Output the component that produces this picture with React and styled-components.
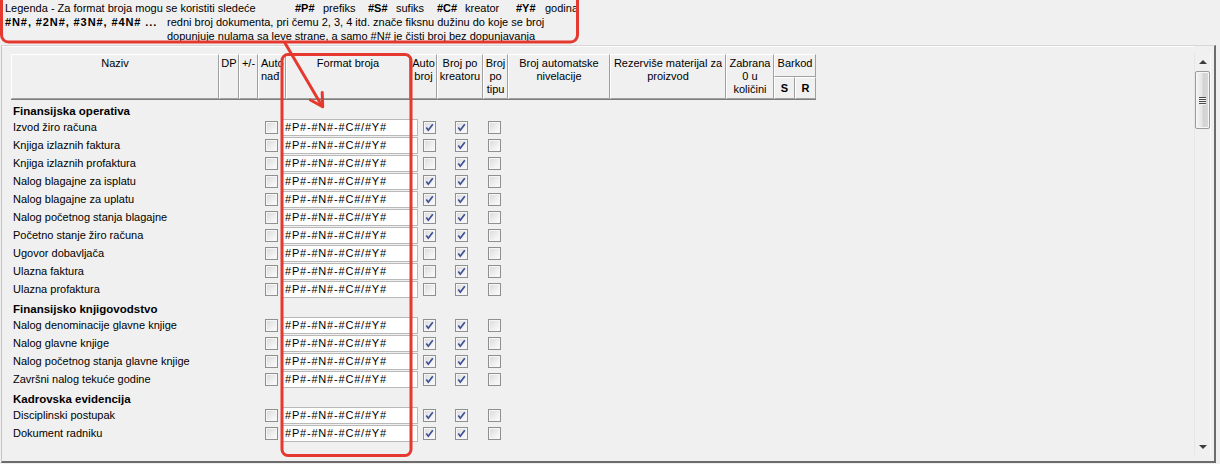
import React from "react";
import styled, { createGlobalStyle } from "styled-components";

const GlobalStyle = createGlobalStyle`
  html, body { margin: 0; padding: 0; background: #f0f0f0; }
  body {
    font-family: "Liberation Sans", Arial, sans-serif;
    font-size: 11px;
    color: #000;
  }
  * { box-sizing: border-box; }
`;

const Screen = styled.div`
  position: relative;
  width: 1220px;
  height: 464px;
  overflow: hidden;
  background: #f0f0f0;
  display: flex;
  flex-direction: column;
`;

/* ---------- legend ---------- */
const Legend = styled.div`
  height: 45px;
  flex: none;
  padding: 1px 0 0 5px;
  display: flex;
  flex-direction: column;
  line-height: 14px;
`;

const LegendLine = styled.div`
  display: flex;
  height: 14px;
  white-space: nowrap;
`;

const LegendLead = styled.span`
  flex: none;
  width: ${(p) => p.$w}px;
  font-weight: ${(p) => (p.$bold ? 700 : 400)};
  letter-spacing: ${(p) => (p.$bold ? "0.9px" : "0")};
`;

const LegendItem = styled.span`
  flex: none;
  width: ${(p) => p.$w}px;
  display: flex;
`;

const Code = styled.span`
  flex: none;
  width: ${(p) => p.$w || 28}px;
  font-weight: 700;
`;

/* ---------- grid frame ---------- */
const Frame = styled.div`
  flex: none;
  height: 418px;
  width: 1215px;
  margin-left: 1px;
  border-top: 1px solid #d6d6d6;
  border-left: 1px solid #b4c8df;
  border-right: 2px solid #6c6c6c;
  border-bottom: 2px solid #6c6c6c;
  display: flex;
`;

const GridArea = styled.div`
  flex: 1;
  overflow: hidden;
  padding: 7px 0 0 9px;
  border-top: 1px solid #fff;
`;

const HeaderRow = styled.div`
  display: flex;
  height: 46px;
  width: 805px;
  border-bottom: 1px solid #7d7d7d;
`;

const HeaderCell = styled.div`
  flex: none;
  width: ${(p) => p.$w}px;
  height: ${(p) => (p.$h ? `${p.$h}px` : "100%")};
  border-top: 1px solid #fff;
  border-left: 1px solid #fff;
  border-right: 1px solid #a0a0a0;
  border-bottom: 1px solid #a0a0a0;
  padding: ${(p) => (p.$pt != null ? p.$pt : 2)}px 1px 0 ${(p) => (p.$left ? 2 : 1)}px;
  text-align: ${(p) => (p.$left ? "left" : "center")};
  line-height: 13px;
  font-weight: ${(p) => (p.$bold ? 700 : 400)};
  overflow: hidden;
  white-space: ${(p) => (p.$pre ? "pre" : "normal")};
`;

const HeaderGroup = styled.div`
  flex: none;
  width: ${(p) => p.$w}px;
  display: flex;
  flex-direction: column;
`;

const HeaderSubRow = styled.div`
  display: flex;
  flex: 1;
`;

const SectionTitle = styled.div`
  height: 18px;
  padding: 4px 0 0 2px;
  font-weight: 700;
  font-size: 11.5px;
  line-height: 14px;
  white-space: nowrap;
`;

const Row = styled.div`
  height: 18px;
  display: grid;
  grid-template-columns: 254px 17px 141px 32px 33px 33px;
  align-items: center;
`;

const RowName = styled.div`
  padding-left: 2px;
  white-space: nowrap;
  line-height: 14px;
`;

const FormatInput = styled.input`
  width: 136px;
  height: 17px;
  margin: 0;
  padding: 0 0 0 2px;
  border: 1px solid #b9b9b9;
  background: #fff;
  font-family: "Liberation Sans", Arial, sans-serif;
  font-size: 11px;
  letter-spacing: 0.8px;
  color: #000;
  outline: none;
`;

const Box = styled.span`
  display: block;
  width: 13px;
  height: 13px;
  border: 1px solid #8e8f8f;
  background: linear-gradient(135deg, #d7d9dc 0%, #eeeeee 55%, #fdfdfd 100%);
  box-shadow: inset 0 0 0 1px #f6f6f6;
  position: relative;
  svg { position: absolute; left: 0; top: 0; }
`;

const CheckBox = ({ checked }) => (
  <Box>
    {checked ? (
      <svg width="11" height="11" viewBox="0 0 11 11">
        <path d="M2.3 5.6 L4.3 8.2 L8.8 2.2" fill="none" stroke="#3b4f96" strokeWidth="1.7" strokeLinejoin="miter" />
      </svg>
    ) : null}
  </Box>
);

/* ---------- scrollbar ---------- */
const Scrollbar = styled.div`
  flex: none;
  width: 17px;
  margin: 7px 3px 6px 0;
  display: flex;
  flex-direction: column;
  background: #f0f0f0;
  border-left: 1px solid #e6e6e6;
  border-right: 1px solid #fafafa;
`;

const ArrowButton = styled.div`
  height: 17px;
  flex: none;
  display: flex;
  align-items: center;
  justify-content: center;
`;

const Triangle = styled.span`
  width: 0;
  height: 0;
  border-left: 4px solid transparent;
  border-right: 4px solid transparent;
  ${(p) => (p.$down ? "border-top: 4px solid #3d3d3d;" : "border-bottom: 4px solid #3d3d3d;")}
`;

const Thumb = styled.div`
  flex: none;
  height: 58px;
  margin: 1px 0 0 0;
  border: 1px solid #9b9b9b;
  border-radius: 2px;
  background: linear-gradient(90deg, #f4f4f4 0%, #e6e6e6 45%, #d3d3d3 55%, #d9d9d9 100%);
  box-shadow: inset 0 0 0 1px #f7f7f7;
  display: flex;
  flex-direction: column;
  align-items: center;
  justify-content: center;
  gap: 1px;
`;

const Grip = styled.span`
  width: 7px;
  height: 1px;
  background: #4b4b4b;
  box-shadow: 0 1px 0 #f2f2f2;
`;

const Track = styled.div`
  flex: 1;
`;

/* ---------- callout overlay ---------- */
const Callouts = styled.svg`
  position: absolute;
  left: 0;
  top: 0;
  pointer-events: none;
`;

const headerCols = [
  { label: "Naziv", w: 208 },
  { label: "DP", w: 20 },
  { label: "+/-", w: 19 },
  { label: "Auto\nnađ", w: 28, left: true, pre: true },
  { label: "Format broja", w: 124 },
  { label: "Auto broj", w: 27 },
  { label: "Broj po kreatoru", w: 46 },
  { label: "Broj po tipu", w: 25 },
  { label: "Broj automatske nivelacije", w: 102 },
  { label: "Rezerviše materijal za proizvod", w: 116 },
  { label: "Zabrana 0 u količini", w: 48 },
];

const sections = [
  {
    title: "Finansijska operativa",
    rows: [
      ["Izvod žiro računa", true],
      ["Knjiga izlaznih faktura", false],
      ["Knjiga izlaznih profaktura", false],
      ["Nalog blagajne za isplatu", true],
      ["Nalog blagajne za uplatu", true],
      ["Nalog početnog stanja blagajne", true],
      ["Početno stanje žiro računa", true],
      ["Ugovor dobavljača", false],
      ["Ulazna faktura", false],
      ["Ulazna profaktura", false],
    ],
  },
  {
    title: "Finansijsko knjigovodstvo",
    rows: [
      ["Nalog denominacije glavne knjige", true],
      ["Nalog glavne knjige", true],
      ["Nalog početnog stanja glavne knjige", true],
      ["Završni nalog tekuće godine", true],
    ],
  },
  {
    title: "Kadrovska evidencija",
    rows: [
      ["Disciplinski postupak", true],
      ["Dokument radniku", true],
    ],
  },
];

const FORMAT = "#P#-#N#-#C#/#Y#";

export default function App() {
  return (
    <Screen>
      <GlobalStyle />
      <Legend>
        <LegendLine>
          <LegendLead $w={290}>Legenda - Za format broja mogu se koristiti sledeće</LegendLead>
          <LegendItem $w={73}>
            <Code>#P#</Code>prefiks
          </LegendItem>
          <LegendItem $w={69}>
            <Code>#S#</Code>sufiks
          </LegendItem>
          <LegendItem $w={79}>
            <Code>#C#</Code>kreator
          </LegendItem>
          <LegendItem $w={80}>
            <Code $w={29}>#Y#</Code>godina
          </LegendItem>
        </LegendLine>
        <LegendLine>
          <LegendLead $w={162} $bold>#N#, #2N#, #3N#, #4N# ...</LegendLead>
          <span>redni broj dokumenta, pri čemu 2, 3, 4 itd. znače fiksnu dužinu do koje se broj</span>
        </LegendLine>
        <LegendLine>
          <LegendLead $w={162} />
          <span>dopunjuje nulama sa leve strane, a samo #N# je čisti broj bez dopunjavanja</span>
        </LegendLine>
      </Legend>

      <Frame>
        <GridArea>
          <HeaderRow>
            {headerCols.map((c) => (
              <HeaderCell key={c.label} $w={c.w} $left={c.left} $pre={c.pre}>
                {c.label}
              </HeaderCell>
            ))}
            <HeaderGroup $w={42}>
              <HeaderCell $w={42} $h={23}>Barkod</HeaderCell>
              <HeaderSubRow>
                <HeaderCell $w={21} $bold $pt={4}>S</HeaderCell>
                <HeaderCell $w={21} $bold $pt={4}>R</HeaderCell>
              </HeaderSubRow>
            </HeaderGroup>
          </HeaderRow>

          {sections.map((s) => (
            <div key={s.title}>
              <SectionTitle>{s.title}</SectionTitle>
              {s.rows.map(([name, auto]) => (
                <Row key={name}>
                  <RowName>{name}</RowName>
                  <CheckBox />
                  <FormatInput readOnly value={FORMAT} />
                  <CheckBox checked={auto} />
                  <CheckBox checked />
                  <CheckBox />
                </Row>
              ))}
            </div>
          ))}
        </GridArea>

        <Scrollbar>
          <ArrowButton>
            <Triangle />
          </ArrowButton>
          <Thumb>
            <Grip />
            <Grip />
            <Grip />
            <Grip />
          </Thumb>
          <Track />
          <ArrowButton>
            <Triangle $down />
          </ArrowButton>
        </Scrollbar>
      </Frame>

      <Callouts width="1220" height="464" viewBox="0 0 1220 464">
        <rect x="1.5" y="-12" width="576" height="54" rx="7" fill="none" stroke="#e5392f" strokeWidth="3" />
        <rect x="282" y="54.5" width="129" height="401" rx="6" fill="none" stroke="#e5392f" strokeWidth="3" />
        <line x1="285" y1="43" x2="322" y2="106" stroke="#e5392f" strokeWidth="3" strokeLinecap="round" />
        <polyline points="310.4,100 322.7,106.7 322.2,92.5" fill="none" stroke="#e5392f" strokeWidth="3" strokeLinecap="round" strokeLinejoin="round" />
      </Callouts>
    </Screen>
  );
}
